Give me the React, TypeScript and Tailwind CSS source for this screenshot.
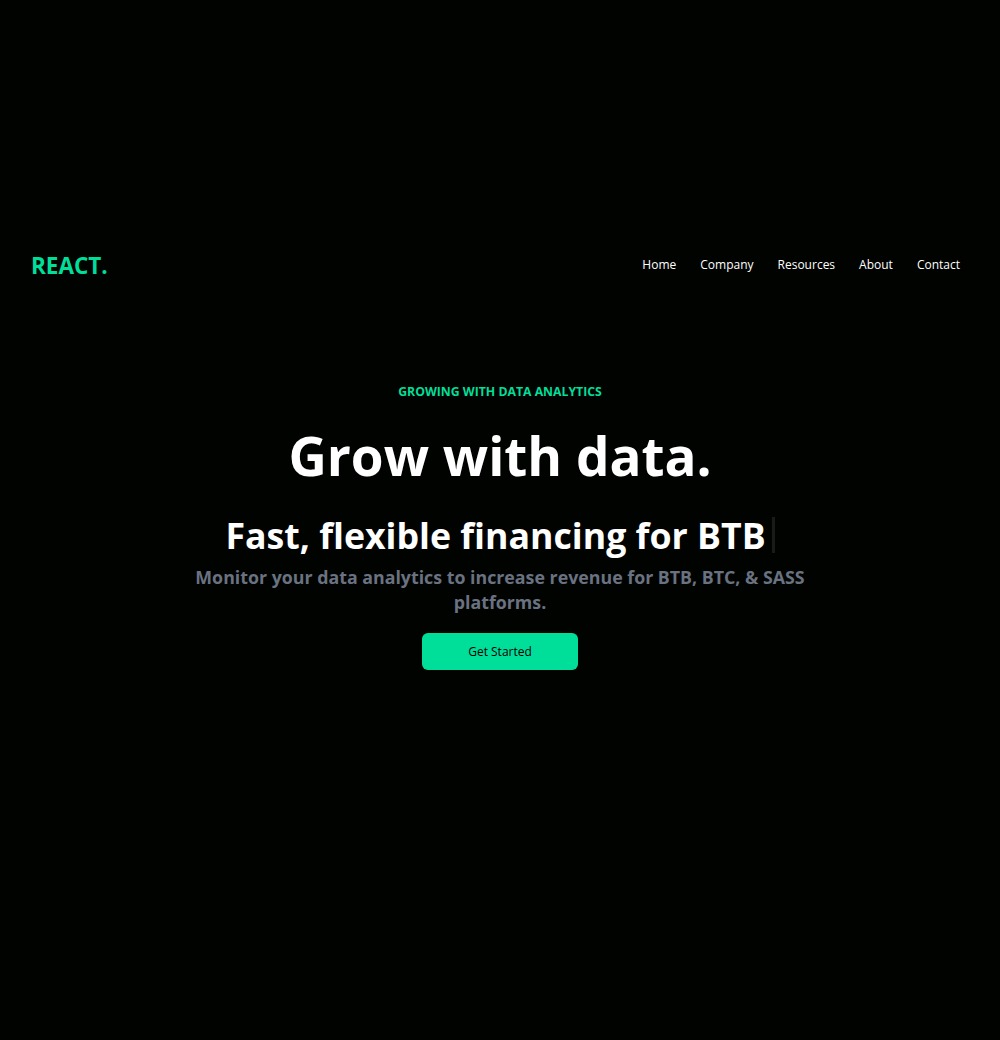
export default function App() {
  const links = ["Home", "Company", "Resources", "About", "Contact"];

  return (
    <div
      className="min-h-screen w-full bg-[#000300] text-white"
      style={{ fontFamily: '"Open Sans", "Noto Sans", sans-serif' }}
    >
      <div className="pt-[233px]">
        <nav className="flex h-16 items-center justify-between pl-[31px] pr-[28px]">
          <h1 className="mt-[2px] text-[22.5px] font-bold text-[#00df9a]">REACT.</h1>
          <ul className="flex">
            {links.map((link) => (
              <li key={link} className="px-3 text-[12px] text-white">
                {link}
              </li>
            ))}
          </ul>
        </nav>
      </div>

      <div className="mx-auto mt-[85px] flex w-full max-w-[800px] flex-col items-center text-center">
        <p className="text-[12.25px] font-bold leading-5 text-[#00df9a]">
          GROWING WITH DATA ANALYTICS
        </p>
        <h2 className="mt-[24px] text-[53px] font-bold leading-[60px]">
          Grow with data.
        </h2>
        <div className="mt-[25px] flex h-[48px] items-center justify-center">
          <p className="text-[35.7px] font-bold leading-[48px]">
            Fast, flexible financing for BTB
          </p>
          <span className="ml-[6px] h-[36px] w-[3px] bg-[#1a1a1a]" />
        </div>
        <p className="mt-[6px] max-w-[660px] text-[17.8px] font-bold leading-[25px] text-gray-500">
          Monitor your data analytics to increase revenue for BTB, BTC, &amp;
          SASS platforms.
        </p>
        <button className="mt-[18px] h-[37px] w-[156px] rounded-md bg-[#00df9a] text-[12px] text-black">
          Get Started
        </button>
      </div>
    </div>
  );
}
